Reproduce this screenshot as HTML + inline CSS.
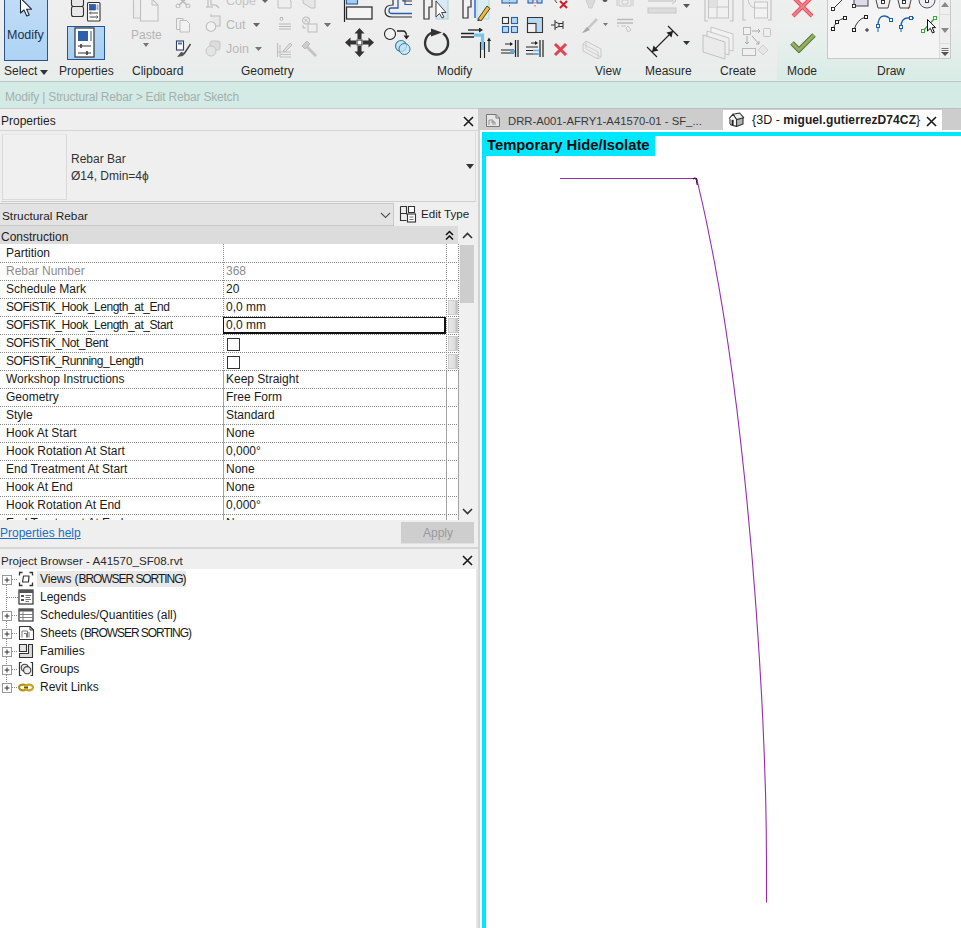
<!DOCTYPE html>
<html><head><meta charset="utf-8">
<style>
*{box-sizing:border-box;margin:0;padding:0}
html,body{width:961px;height:928px;overflow:hidden;background:#f0f0f0;font-family:"Liberation Sans",sans-serif;font-size:12px;color:#1e1e1e}
.abs{position:absolute}
.t{position:absolute;white-space:nowrap;line-height:14px}
#ribbon{left:0;top:0;width:961px;height:82px;background:linear-gradient(#eeefee 0,#ebedec 60px,#e6eeeb 81px);border-bottom:1px solid #b9c8c4}
.plabel{position:absolute;top:64px;font-size:12px;line-height:14px;color:#2a2a2a;white-space:nowrap}
#ctx{left:0;top:82px;width:961px;height:27px;background:#d4ebe5;border-bottom:1px solid #c9cbca}
#props{left:0;top:108px;width:478px;height:442px;background:#efefef;box-shadow:inset 0 1px #c9cbca}
#pb{left:0;top:550px;width:478px;height:378px;background:#ffffff}
#split{left:478px;top:108px;width:4px;height:820px;background:#fcfcfc;border-left:2px solid #d2d2d2}
#tabs{left:478px;top:108px;width:483px;height:22px;background:#cdcdcd;box-shadow:inset 0 1px #c0c0c0}
#view{left:482px;top:132px;width:479px;height:796px;background:#fff;border-left:4px solid #00e6ff;border-top:4px solid #00e6ff}
.row{position:absolute;left:0;width:458px;height:18px}
.dotH{position:absolute;height:1px;background-image:linear-gradient(to right,#8a8a8a 50%,transparent 50%);background-size:2px 1px}
.dotV{position:absolute;width:1px;background-image:linear-gradient(to bottom,#8a8a8a 50%,transparent 50%);background-size:1px 2px}
.gk{position:absolute;left:6px;white-space:nowrap;font-size:12px;line-height:14px}
.gv{position:absolute;left:226px;white-space:nowrap;font-size:12px;line-height:14px}
.cb{position:absolute;left:227px;width:13px;height:13px;border:1px solid #333;background:#fff}
.sel{position:absolute;left:223px;width:223px;height:18px;border:2px solid #111;border-width:1px 2px 2px 1px;margin-top:1px;height:17px}
.btn3{position:absolute;left:448px;width:10px;height:15px;background:linear-gradient(to right,#e8e8e8,#dcdcdc 70%,#b8b8b8);border:1px solid #cfcfcf}
</style></head><body>
<div id="ribbon" class="abs">
 <div class="abs" style="left:777px;top:0;width:184px;height:80px;background:linear-gradient(#eeefef 0px,#eaefed 35px,#d8ece6 80px)"></div>
 <!-- Select panel -->
 <div class="abs" style="left:4px;top:-2px;width:44px;height:63px;background:linear-gradient(#c0dcf6,#add3f4);border:1px solid #2a5490"></div>
 <svg class="abs" style="left:18px;top:-2px" width="16" height="21" viewBox="0 0 16 21"><path d="M2.5 0V15L6 12L8.8 18L11.2 17L8.6 11.2H13.5Z" fill="#fff" stroke="#1e2a38" stroke-width="1.1" stroke-linejoin="round"/></svg>
 <span class="t" style="left:7px;top:28px;font-size:12.5px;color:#1d3150">Modify</span>
 <span class="plabel" style="left:4px">Select</span>
 <svg class="abs" style="left:40px;top:70px" width="8" height="5"><path d="M0 0H8L4 5Z" fill="#333"/></svg>
 <!-- Properties panel -->
 <svg class="abs" style="left:70px;top:-4px" width="32" height="26" viewBox="0 0 32 26"><rect x="1.5" y="0.5" width="12" height="10" rx="2" fill="#e8e8e8" stroke="#333" stroke-width="1.1"/><rect x="1.5" y="10.5" width="12" height="10" rx="2" fill="#e8e8e8" stroke="#333" stroke-width="1.1"/><rect x="17.5" y="6.5" width="12.5" height="18.5" rx="1" fill="#fff" stroke="#333" stroke-width="1.1"/><rect x="19.5" y="8.5" width="6" height="5.5" fill="#2e5fa8" stroke="#1e3f78" stroke-width="0.6"/><rect x="26.5" y="8.5" width="2" height="5.5" fill="#9ab0c8"/><path d="M19.5 17H28M19.5 21H28" stroke="#444" stroke-width="1"/><path d="M21 15.5L19.5 17L21 18.5M26.5 19.5L28 21L26.5 22.5" fill="none" stroke="#444" stroke-width="0.8"/></svg>
 <div class="abs" style="left:67px;top:26px;width:38px;height:34px;background:linear-gradient(#b4d6f4,#a6cff2);border:1px solid #2a5490"></div>
 <svg class="abs" style="left:74px;top:27px" width="22" height="32" viewBox="0 0 22 32"><rect x="1" y="1" width="19" height="29" fill="#fff" stroke="#333" stroke-width="1.2"/><rect x="4" y="4" width="10" height="10" fill="#2e5fa8"/><rect x="16" y="4" width="2" height="10" fill="#9ab"/><path d="M4 19H17M4 26H17" stroke="#333" stroke-width="1.2"/><path d="M7 17V21M13 24V28" stroke="#333" stroke-width="1.5"/></svg>
 <span class="plabel" style="left:59px">Properties</span>
 <!-- Clipboard -->
 <svg class="abs" style="left:132px;top:-1px" width="28" height="24" viewBox="0 0 28 24"><path d="M1.5 0V19H8" fill="#ececec" stroke="#c4c4c4" stroke-width="1.1"/><path d="M8.5 0V22H26V6L20 0" fill="#f0f0f0" stroke="#c0c0c0" stroke-width="1.1"/><path d="M20 0V6H26" fill="none" stroke="#c0c0c0"/></svg>
 <span class="t" style="left:131px;top:28px;font-size:12px;color:#b4b4b4">Paste</span>
 <svg class="abs" style="left:143px;top:43px" width="6" height="4"><path d="M0 0H6L3 4Z" fill="#777"/></svg>
 <svg class="abs" style="left:175px;top:-2px" width="16" height="10" viewBox="0 0 16 10"><path d="M4 0L12 7M12 0L4 7" stroke="#b8b8b8" stroke-width="1.5"/><circle cx="3" cy="8" r="2" fill="none" stroke="#b8b8b8"/><circle cx="13" cy="8" r="2" fill="none" stroke="#b8b8b8"/></svg>
 <svg class="abs" style="left:175px;top:17px" width="16" height="16" viewBox="0 0 16 16"><path d="M1.5 1.5H8V12.5H1.5Z" fill="#f0f0f0" stroke="#bdbdbd"/><path d="M5 3.5H11.5L14.5 6.5V15H5Z" fill="#f2f2f2" stroke="#bdbdbd"/></svg>
 <svg class="abs" style="left:175px;top:40px" width="17" height="18" viewBox="0 0 17 18"><rect x="1.5" y="1" width="7" height="9" fill="#fff" stroke="#2d3e6b" stroke-width="1.1"/><rect x="3" y="2.5" width="4" height="2" fill="#5571b0"/><path d="M9 14L15.5 4" stroke="#444" stroke-width="1.4"/><path d="M2 17L6 12L10 13L8 16Z" fill="#555"/></svg>
 <span class="plabel" style="left:132px">Clipboard</span>
 <!-- Geometry -->
 <svg class="abs" style="left:205px;top:-3px" width="17" height="12" viewBox="0 0 17 12"><path d="M1 10H8M3 1V10M6 3V8H11L14 11" fill="none" stroke="#b8b8b8" stroke-width="1.1"/></svg>
 <span class="t" style="left:226px;top:-6px;font-size:12.5px;color:#c4c4c4">Cope</span>
 <svg class="abs" style="left:262px;top:0px" width="6" height="3"><path d="M0 0H6L3 3Z" fill="#666"/></svg>
 <svg class="abs" style="left:205px;top:14px" width="17" height="19" viewBox="0 0 17 19"><path d="M6 2H15V12H9" fill="#e8e8e8" stroke="#bdbdbd" stroke-width="1.1"/><circle cx="6" cy="12.5" r="4.8" fill="#f2f2f2" stroke="#bdbdbd" stroke-width="1.1"/><path d="M6 0V3" stroke="#bdbdbd"/></svg>
 <span class="t" style="left:226px;top:18px;font-size:12.5px;color:#b8b8b8">Cut</span>
 <svg class="abs" style="left:253px;top:23px" width="7" height="4"><path d="M0 0H7L3.5 4Z" fill="#666"/></svg>
 <svg class="abs" style="left:205px;top:40px" width="17" height="18" viewBox="0 0 17 18"><rect x="5" y="1" width="10" height="9" rx="2" fill="#dcdcdc" stroke="#c6c6c6"/><circle cx="6" cy="11" r="5" fill="#e4e4e4" stroke="#c6c6c6"/></svg>
 <span class="t" style="left:226px;top:42px;font-size:12.5px;color:#b8b8b8">Join</span>
 <svg class="abs" style="left:255px;top:47px" width="7" height="4"><path d="M0 0H7L3.5 4Z" fill="#777"/></svg>
 <svg class="abs" style="left:276px;top:-3px" width="17" height="12" viewBox="0 0 17 12"><path d="M2 1H12L15 4V11H2Z" fill="#eee" stroke="#c0c0c0"/></svg>
 <svg class="abs" style="left:301px;top:-3px" width="17" height="12" viewBox="0 0 17 12"><path d="M2 1H14V11L10 11L2 6Z" fill="#e6e6e6" stroke="#c0c0c0"/></svg>
 <svg class="abs" style="left:277px;top:16px" width="16" height="14" viewBox="0 0 16 14"><path d="M3 1.5H6M2 8H14M2 10.5H14M2 13H14" stroke="#b8b8b8" stroke-width="1.1"/><circle cx="4.5" cy="3" r="1.5" fill="none" stroke="#bbb"/></svg>
 <svg class="abs" style="left:301px;top:16px" width="17" height="17" viewBox="0 0 17 17"><circle cx="5" cy="4.5" r="3.5" fill="none" stroke="#bbb" stroke-width="1.1"/><path d="M3 2.5L7 6.5M7 2.5L3 6.5" stroke="#bbb"/><rect x="7" y="8" width="9" height="8" fill="#eee" stroke="#bbb"/><path d="M2 9V12H5" fill="none" stroke="#bbb"/></svg>
 <svg class="abs" style="left:324px;top:23px" width="7" height="4"><path d="M0 0H7L3.5 4Z" fill="#666"/></svg>
 <svg class="abs" style="left:276px;top:40px" width="17" height="18" viewBox="0 0 17 18"><path d="M1.5 3V17M4 5V17M1.5 12H15M4 14.5H15M4 17H15" stroke="#c0c0c0" stroke-width="1.1"/><path d="M7 11L14 3L16 5L9 12Z" fill="#ddd" stroke="#bbb"/></svg>
 <svg class="abs" style="left:300px;top:40px" width="18" height="18" viewBox="0 0 18 18"><path d="M7 7L16 16" stroke="#c4c4c4" stroke-width="3"/><path d="M2 6L7 1L10 4L5 9Z" fill="#ccc" stroke="#bbb"/></svg>
 <span class="plabel" style="left:241px">Geometry</span>
 <!-- Modify -->
 <svg class="abs" style="left:325px;top:23px" width="5" height="3"><path d="M0 0H5L2.5 3Z" fill="#777"/></svg>
 <svg class="abs" style="left:343px;top:-3px" width="32" height="26" viewBox="0 0 32 26"><path d="M1.5 0V25" stroke="#222" stroke-width="1.2"/><rect x="3.5" y="1" width="11" height="6" fill="#a8cdf0" stroke="#2a5ea8" stroke-width="1.1"/><rect x="3.5" y="10" width="25.5" height="12" fill="#f4f4f4" stroke="#333" stroke-width="1.3"/></svg>
 <svg class="abs" style="left:383px;top:-3px" width="31" height="22" viewBox="0 0 31 22"><path d="M10 0V8Q2 8 2 14Q2 20 9 20H29" fill="none" stroke="#333" stroke-width="1.2"/><path d="M15 0V11H8Q6 11 6 14Q6 16.5 9 16.5H29" fill="none" stroke="#2a5ea8" stroke-width="1.3"/><path d="M20 0V4H29M24 0V1" fill="none" stroke="#333" stroke-width="1.1"/><path d="M22 2V7.5H29" fill="none" stroke="#2a5ea8" stroke-width="1.2"/></svg>
 <svg class="abs" style="left:422px;top:-3px" width="28" height="23" viewBox="0 0 28 23"><path d="M2 0V22H7V10H10V0" fill="#f2f2f2" stroke="#333" stroke-width="1.2"/><rect x="14" y="0" width="12" height="22" fill="#d8e8f4" stroke="#9cc" stroke-width="0.8"/><path d="M14 4V20L17.5 16.5L20 21L22 20L19.5 15.5H24Z" fill="#fff" stroke="#444" stroke-width="1"/></svg>
 <svg class="abs" style="left:461px;top:-3px" width="30" height="24" viewBox="0 0 30 24"><path d="M2 0V21H7V10H10V0" fill="#f2f2f2" stroke="#333" stroke-width="1.2"/><path d="M14 0V21" stroke="#2a6ad0" stroke-width="1.5"/><rect x="16" y="0" width="12" height="22" fill="#d8eef0" stroke="#9cc" stroke-width="0.6"/><path d="M17 22L26 9L29 11.5L20 24Z" fill="#f5b82e" stroke="#333" stroke-width="0.9"/><path d="M17 22L16 24.5L19 23.5" fill="#333"/></svg>
 <svg class="abs" style="left:344px;top:27px" width="31" height="31" viewBox="0 0 31 31"><path d="M15.5 1L20.5 6.5H17.5V12H13.5V6.5H10.5Z M15.5 30L20.5 24.5H17.5V19H13.5V24.5H10.5Z M1 15.5L6.5 10.5V13.5H12V17.5H6.5V20.5Z M30 15.5L24.5 10.5V13.5H19V17.5H24.5V20.5Z" fill="#333"/><rect x="13" y="13" width="5" height="5" fill="#fff" stroke="#333" stroke-width="1.1"/></svg>
 <svg class="abs" style="left:383px;top:27px" width="30" height="30" viewBox="0 0 30 30"><circle cx="7" cy="7" r="5.5" fill="#f3f3f3" stroke="#222" stroke-width="1.1"/><path d="M14 4H20Q23 4 23.5 8.5" fill="none" stroke="#222" stroke-width="1.3"/><path d="M20.5 8.5H26.5L23.5 12.5Z" fill="#222"/><circle cx="18" cy="19" r="5.5" fill="#c6e2f6" stroke="#2e7f9a" stroke-width="1.1"/><circle cx="21.5" cy="22" r="5.5" fill="#c6e2f6" stroke="#2e7f9a" stroke-width="1" fill-opacity="0.7"/></svg>
 <svg class="abs" style="left:422px;top:28px" width="30" height="30" viewBox="0 0 30 30"><path d="M10 4.5A11.5 11.5 0 1 0 21 5.5" fill="none" stroke="#333" stroke-width="2.4"/><path d="M9 0.5L20 4.5L9 8.5Z" fill="#333"/></svg>
 <svg class="abs" style="left:460px;top:28px" width="31" height="30" viewBox="0 0 31 30"><path d="M8 2H20" stroke="#222" stroke-width="1.3"/><path d="M19 -0.5L23 2L19 4.5Z" fill="#222"/><path d="M1 5.5H14M1 9H14" stroke="#222" stroke-width="1.3"/><path d="M14 7.2H22.5V22" fill="none" stroke="#74c4f0" stroke-width="3.2"/><path d="M20.5 14V30M24.5 14V30" fill="none" stroke="#222" stroke-width="1.1"/><path d="M20.9 12V22" stroke="#74c4f0" stroke-width="0" /><path d="M29 11V24" stroke="#222" stroke-width="1.2"/><path d="M27 13L29 9.5L31 13Z" fill="#222"/></svg>
 <svg class="abs" style="left:500px;top:-4px" width="20" height="11" viewBox="0 0 20 11"><rect x="2" y="0" width="15" height="7" fill="#b4d4f0" stroke="#2a5ea8" stroke-width="1.1"/><path d="M9.5 0V11" stroke="#d44" stroke-width="1" stroke-dasharray="1.5 1.5"/></svg>
 <svg class="abs" style="left:526px;top:-4px" width="20" height="11" viewBox="0 0 20 11"><rect x="2" y="0" width="5" height="7" fill="#b4d4f0" stroke="#2a5ea8" stroke-width="1.1"/><rect x="11" y="0" width="5" height="7" fill="#b4d4f0" stroke="#2a5ea8" stroke-width="1.1"/><path d="M9 0V11" stroke="#d44" stroke-width="1" stroke-dasharray="1.5 1.5"/></svg>
 <svg class="abs" style="left:553px;top:-3px" width="16" height="12" viewBox="0 0 16 12"><path d="M1 2L4 6" stroke="#444"/><path d="M7 4L14 11M14 4L7 11" stroke="#d02030" stroke-width="2"/></svg>
 <svg class="abs" style="left:501px;top:16px" width="18" height="18" viewBox="0 0 18 18"><rect x="1.5" y="1.5" width="6" height="6" fill="#f4f4f4" stroke="#333" stroke-width="1.1"/><rect x="10.5" y="1.5" width="6" height="6" fill="#b8d8f2" stroke="#2a5ea8" stroke-width="1.1"/><rect x="1.5" y="10.5" width="6" height="6" fill="#b8d8f2" stroke="#2a5ea8" stroke-width="1.1"/><rect x="10.5" y="10.5" width="6" height="6" fill="#b8d8f2" stroke="#2a5ea8" stroke-width="1.1"/></svg>
 <svg class="abs" style="left:526px;top:16px" width="18" height="18" viewBox="0 0 18 18"><path d="M1.5 1.5H16.5V16.5H1.5Z" fill="#b8d8f2" stroke="#333" stroke-width="1.1"/><rect x="1.5" y="7.5" width="8.5" height="9" fill="#f0f0f0" stroke="#333" stroke-width="1.1"/></svg>
 <svg class="abs" style="left:551px;top:19px" width="16" height="13" viewBox="0 0 16 13"><path d="M0 6H4M4 1V11M4 3L8 4.5V7.5L4 9M8 4.5H12M8 7.5H12M12 2V10" fill="none" stroke="#333" stroke-width="1"/></svg>
 <svg class="abs" style="left:501px;top:39px" width="18" height="19" viewBox="0 0 18 19"><path d="M4 5H11M0 11H13M0 14H13" stroke="#222" stroke-width="1.2"/><path d="M9 3L12 5L9 7Z" fill="#222"/><path d="M9 12.5H14" stroke="#5db3ea" stroke-width="2.5"/><path d="M14.5 1V18M17 1V18" stroke="#222" stroke-width="1.2"/></svg>
 <svg class="abs" style="left:526px;top:39px" width="18" height="19" viewBox="0 0 18 19"><path d="M5 4H11M0 8H12M0 11.5H12M0 15H12" stroke="#222" stroke-width="1.2"/><path d="M9 2L12 4L9 6Z" fill="#222"/><path d="M7 11.5H13M7 15H13" stroke="#5db3ea" stroke-width="1.5"/><path d="M14 1V18M17 1V18" stroke="#222" stroke-width="1.2"/></svg>
 <svg class="abs" style="left:553px;top:42px" width="15" height="15" viewBox="0 0 15 15"><path d="M2 2L13 13M13 2L2 13" stroke="#e34050" stroke-width="3"/></svg>
 <span class="plabel" style="left:437px">Modify</span>
 <!-- View -->
 <svg class="abs" style="left:581px;top:-3px" width="60" height="62" viewBox="0 0 60 62"><path d="M5 1Q5 6 7 8L8 11H11L12 8Q14 6 14 1Z" fill="#dadada" stroke="#c8c8c8" stroke-width="0.8"/><ellipse cx="24" cy="3" rx="2.5" ry="2" fill="#555"/><path d="M36 0V9M52 0V9M38 0V9H50V0M41 3H47V7H41Z" fill="none" stroke="#c4c4c4" stroke-width="0.9"/><path d="M1 36L15 21L17 23L5 35Z" fill="#c8c8c8"/><path d="M1 36L6 30L9 33Z" fill="#a8a8a8"/><path d="M22 26H27L24.5 29Z" fill="#777"/><path d="M36 22.5H52M36 26H52" stroke="#bbb" stroke-width="1.4"/><path d="M36 29H38M40 29H45M45 31L47 29L50 33L47 35Z" fill="none" stroke="#c0c0c0" stroke-width="0.9"/><path d="M2 47L5 44L20 52V60L17 62L2 54Z" fill="#ececec" stroke="#c4c4c4" stroke-width="0.9"/><path d="M5 44V52L20 60M2 47L17 55V62" fill="none" stroke="#c8c8c8" stroke-width="0.8"/></svg>
 <span class="plabel" style="left:595px">View</span>
 <!-- Measure -->
 <svg class="abs" style="left:646px;top:-3px" width="32" height="19" viewBox="0 0 32 19"><path d="M2 4H28" stroke="#c4c4c4" stroke-width="1.2"/><path d="M26 1L30 4L26 7" fill="none" stroke="#c4c4c4"/><rect x="2" y="11" width="28" height="5" fill="#dcdcdc" stroke="#c8c8c8"/></svg>
 <svg class="abs" style="left:683px;top:4px" width="7" height="4"><path d="M0 0H7L3.5 4Z" fill="#555"/></svg>
 <svg class="abs" style="left:646px;top:25px" width="33" height="33" viewBox="0 0 33 33"><path d="M1 22L11 32M22 1L32 11" stroke="#222" stroke-width="1.2"/><path d="M6 27L27 6" stroke="#222" stroke-width="1.1"/><path d="M6 27L7.5 20.5L12.5 25.5Z M27 6L25.5 12.5L20.5 7.5Z" fill="#222"/></svg>
 <svg class="abs" style="left:683px;top:41px" width="7" height="4"><path d="M0 0H7L3.5 4Z" fill="#333"/></svg>
 <span class="plabel" style="left:645px">Measure</span>
 <!-- Create -->
 <svg class="abs" style="left:702px;top:-3px" width="72" height="64" viewBox="0 0 72 64"><path d="M3 0V24H6M31 0V24H28" fill="none" stroke="#c0c0c0" stroke-width="1.1"/><rect x="6.5" y="0" width="20" height="21" fill="#f0f0f0" stroke="#c4c4c4"/><path d="M15 0V21M6.5 10H26.5" stroke="#c4c4c4"/><rect x="7" y="0" width="8" height="10" fill="#e0e0e0"/><path d="M41 0V23H44M69 0V23H66" fill="none" stroke="#c0c0c0" stroke-width="1.1"/><path d="M46 0Q46 10 53 11" fill="#eee" stroke="#c4c4c4"/><rect x="52.5" y="5" width="13" height="16" fill="#f2f2f2" stroke="#c4c4c4"/><path d="M52.5 11H65.5" stroke="#c4c4c4"/>
 <path d="M9 30L31 37V54L9 47Z" fill="#f2f2f2" stroke="#c2c2c2" stroke-width="0.9"/><path d="M5 34L27 41V58L5 51Z" fill="#efefef" stroke="#c0c0c0" stroke-width="0.9"/><path d="M1 38L23 45V62L1 55Z" fill="#ebebeb" stroke="#bcbcbc" stroke-width="0.9"/>
 <rect x="41.5" y="30.5" width="7" height="7" fill="#f2f2f2" stroke="#b8b8b8"/><path d="M50 34H58M56 32L58 34L56 36" fill="none" stroke="#aaa"/><rect x="61.5" y="31.5" width="7" height="8" rx="1" fill="#eee" stroke="#c4c4c4"/><path d="M45 39V47M43 45L45 47L47 45" fill="none" stroke="#aaa"/><path d="M50 39L57 47M57 44V47H54" fill="none" stroke="#aaa"/><rect x="40.5" y="51.5" width="13" height="7" fill="#f0f0f0" stroke="#b8b8b8"/><path d="M61 48L66 53L61 58L56 53Z" fill="#e6e6e6" stroke="#cfcfcf"/></svg>
 <span class="plabel" style="left:720px">Create</span>
 <!-- Mode -->
 <svg class="abs" style="left:790px;top:-3px" width="25" height="21" viewBox="0 0 25 21"><path d="M3 0L22 19M22 0L3 19" stroke="#e9505e" stroke-width="4"/><path d="M3 0L22 19M22 0L3 19" stroke="#f27f8a" stroke-width="2"/></svg>
 <svg class="abs" style="left:790px;top:33px" width="26" height="20" viewBox="0 0 26 20"><path d="M2 10L9 17L24 2" fill="none" stroke="#5a7536" stroke-width="5"/><path d="M2 10L9 17L24 2" fill="none" stroke="#93b062" stroke-width="3"/></svg>
 <span class="plabel" style="left:787px">Mode</span>
 <!-- Draw gallery -->
 <div class="abs" style="left:827px;top:-2px;width:124px;height:61px;background:#f4f4f4;border:1px solid #c8c8c8"></div>
 <div class="abs" style="left:939px;top:-1px;width:11px;height:59px;background:#efefef;border-left:1px solid #dadada"></div>
 <div class="abs" style="left:940px;top:14px;width:10px;height:1px;background:#dedede"></div>
 <div class="abs" style="left:940px;top:43px;width:10px;height:1px;background:#dedede"></div>
 <svg class="abs" style="left:941px;top:2px" width="8" height="5"><path d="M0 5H8L4 0Z" fill="#888"/></svg>
 <svg class="abs" style="left:941px;top:28px" width="8" height="5"><path d="M0 0H8L4 5Z" fill="#888"/></svg>
 <svg class="abs" style="left:941px;top:48px" width="8" height="8"><path d="M0.5 0.5H7.5M0.5 2.5H7.5" stroke="#777"/><path d="M0 4H8L4 8Z" fill="#555"/></svg>
 <svg class="abs" style="left:830px;top:-4px" width="108" height="40" viewBox="0 0 108 40"><path d="M3 13L13 3" stroke="#333" stroke-width="1"/><rect x="1.5" y="11.5" width="3" height="3" fill="#fff" stroke="#222" stroke-width="0.9"/><rect x="24" y="-2" width="14" height="12" fill="#dcdce8" stroke="#444" stroke-width="1"/><rect x="22.5" y="8.5" width="3" height="3" fill="#fff" stroke="#222" stroke-width="0.9"/><path d="M45 0L48 12H58L61 0" fill="#f0f0f0" stroke="#444" stroke-width="1"/><rect x="51.5" y="4.5" width="3" height="3" fill="#fff" stroke="#222" stroke-width="0.9"/><path d="M67 0L70 12H79L82 0" fill="#f0f0f0" stroke="#444" stroke-width="1"/><rect x="72.5" y="4.5" width="3" height="3" fill="#fff" stroke="#222" stroke-width="0.9"/><path d="M80 10L78 13" stroke="#c33" stroke-width="1.2"/><circle cx="97" cy="4" r="8" fill="#eeeef2" stroke="#555" stroke-width="1"/><rect x="95.5" y="3.5" width="3" height="3" fill="#fff" stroke="#222" stroke-width="0.9"/>
 <path d="M3 34Q5 24 15 22" fill="none" stroke="#333"/><rect x="1.5" y="31.5" width="3" height="3" fill="#fff" stroke="#222"/><rect x="5.5" y="24.5" width="3" height="3" fill="#fff" stroke="#222"/><rect x="13.5" y="20.5" width="3" height="3" fill="#fff" stroke="#222"/>
 <path d="M24 34Q27 23 36 21" fill="none" stroke="#333"/><rect x="22.5" y="32.5" width="3" height="3" fill="#fff" stroke="#222"/><rect x="34.5" y="19.5" width="3" height="3" fill="#fff" stroke="#222"/><path d="M35 34H39M37 32V36" stroke="#222"/>
 <path d="M48 30Q48 20 54 20Q58 20 61 24" fill="none" stroke="#2160a8" stroke-width="1.3"/><rect x="46.5" y="28.5" width="3" height="3" fill="#fff" stroke="#2160a8"/><rect x="59.5" y="22.5" width="3" height="3" fill="#fff" stroke="#2160a8"/><path d="M48 32V36" stroke="#2160a8"/>
 <path d="M71 31Q71 22 78 22H84" fill="none" stroke="#2160a8" stroke-width="1.3"/><rect x="69.5" y="29.5" width="3" height="3" fill="#fff" stroke="#2160a8"/><rect x="79.5" y="20.5" width="3" height="3" fill="#fff" stroke="#2160a8"/><path d="M71 33V36" stroke="#2160a8"/>
 <path d="M93 35L105 22" stroke="#3aa83a" stroke-width="1.3"/><rect x="91.5" y="33.5" width="3" height="3" fill="#fff" stroke="#3aa83a"/><rect x="103.5" y="20.5" width="3" height="3" fill="#fff" stroke="#3aa83a"/><path d="M97.5 23.5V35L100.3 32.3L102.5 37L104.3 36.2L102.2 31.6H105.5Z" fill="#fff" stroke="#111" stroke-width="1"/></svg>
 <span class="plabel" style="left:877px">Draw</span>
</div>

<div id="ctx" class="abs"><span class="t" style="left:5px;top:8px;color:#a3b0ad;font-size:12px;letter-spacing:-0.2px">Modify | Structural Rebar &gt; Edit Rebar Sketch</span></div>
<div id="props" class="abs">
 <div class="abs" style="left:0;top:1px;width:478px;height:22px;background:#efefef;border-bottom:1px solid #d4d4d4"></div>
 <span class="t" style="left:1px;top:6px;font-size:12px">Properties</span>
 <svg class="abs" style="left:463px;top:8px" width="11" height="11" viewBox="0 0 11 11"><path d="M1 1L10 10M10 1L1 10" stroke="#1a1a1a" stroke-width="1.6"/></svg>
 <div class="abs" style="left:1px;top:24px;width:475px;height:70px;border-right:1px solid #dcdcdc;border-bottom:1px solid #cfcfcf"></div>
 <div class="abs" style="left:2px;top:26px;width:65px;height:66px;border:1px solid #dadada;border-top-color:#e6e6e6;background:#f0f0f0"></div>
 <span class="t" style="left:71px;top:44px;font-size:12px;color:#333">Rebar Bar</span>
 <span class="t" style="left:71px;top:61px;font-size:12px;color:#333">&Oslash;14, Dmin=4&#981;</span>
 <svg class="abs" style="left:466px;top:56px" width="8" height="5"><path d="M0 0H8L4 5Z" fill="#333"/></svg>
 <div class="abs" style="left:0;top:95px;width:394px;height:23px;background:#e3e3e3;border:1px solid #c8c8c8;border-left:none"></div>
 <span class="t" style="left:2px;top:101px;font-size:11.8px;color:#1e1e1e">Structural Rebar</span>
 <svg class="abs" style="left:399px;top:97px" width="18" height="18" viewBox="0 0 18 18"><path d="M1.5 1.5H7.5V9.5M1.5 1.5V15.5H7.5" fill="none" stroke="#333" stroke-width="1.1"/><path d="M9.5 1.5H15.5V7.5H9.5Z" fill="#fff" stroke="#333" stroke-width="1.1"/><rect x="8.5" y="9" width="8" height="8" fill="#fff" stroke="#333" stroke-width="1.1"/><path d="M10.5 12H14.5M10.5 14.5H14.5" stroke="#555" stroke-width="0.8"/><path d="M1.5 8.5H7.5" stroke="#333"/></svg>
 <span class="t" style="left:421px;top:99px;font-size:11.6px;color:#1e1e1e">Edit Type</span>
 <svg class="abs" style="left:380px;top:104px" width="11" height="7"><path d="M1 1L5.5 5.5L10 1" stroke="#555" stroke-width="1.1" fill="none"/></svg>
 <div class="abs" style="left:0;top:118px;width:458px;height:18px;background:#dcdcdc"></div>
 <span class="t" style="left:1px;top:122px;font-size:12px;color:#1e1e1e">Construction</span>
 <svg class="abs" style="left:445px;top:122px" width="9" height="11"><path d="M1 5L4.5 1.5L8 5M1 9.5L4.5 6L8 9.5" stroke="#111" stroke-width="1.5" fill="none"/></svg>
 <svg class="abs" style="left:462px;top:124px" width="11" height="7"><path d="M1 6L5.5 1.5L10 6" stroke="#333" stroke-width="1.6" fill="none"/></svg>
 <div class="abs" style="left:458px;top:136px;width:18px;height:275px;background:#f0f0f0"></div>
 <div class="abs" style="left:460px;top:137px;width:14px;height:58px;background:#cdcdcd"></div>
 <svg class="abs" style="left:462px;top:400px" width="11" height="7"><path d="M1 1L5.5 5.5L10 1" stroke="#333" stroke-width="1.6" fill="none"/></svg>
 <div id="grid" class="abs" style="left:0;top:136px;width:459px;height:276px;background:#fff;overflow:hidden">
  <span class="dotV" style="left:223px;top:0;height:126px"></span>
  <span class="dotV" style="left:446px;top:0;height:126px"></span>
  <span class="dotV" style="left:458px;top:0;height:126px"></span>
  <span class="abs" style="left:223px;top:126px;width:1px;height:150px;background:#a4a4a4"></span>
  <span class="abs" style="left:446px;top:126px;width:1px;height:150px;background:#a4a4a4"></span>
  <span class="abs" style="left:458px;top:126px;width:1px;height:150px;background:#a4a4a4"></span>
<span class="gk" style="top:2px;color:#1a1a1a">Partition</span>
<span class="dotH" style="left:0;width:458px;top:18px"></span>
<span class="gk" style="top:20px;color:#8c8c8c">Rebar Number</span>
<span class="gv" style="top:20px;color:#8c8c8c">368</span>
<span class="dotH" style="left:0;width:458px;top:36px"></span>
<span class="gk" style="top:38px;color:#1a1a1a">Schedule Mark</span>
<span class="gv" style="top:38px;color:#1a1a1a">20</span>
<span class="dotH" style="left:0;width:458px;top:54px"></span>
<span class="gk" style="top:56px;color:#1a1a1a;letter-spacing:-0.45px">SOFiSTiK_Hook_Length_at_End</span>
<span class="gv" style="top:56px;color:#1a1a1a">0,0 mm</span>
<span class="btn3" style="top:56px"></span>
<span class="dotH" style="left:0;width:458px;top:72px"></span>
<span class="gk" style="top:74px;color:#1a1a1a;letter-spacing:-0.45px">SOFiSTiK_Hook_Length_at_Start</span>
<span class="gv" style="top:74px;color:#1a1a1a">0,0 mm</span>
<span class="sel" style="top:72px"></span>
<span class="btn3" style="top:74px"></span>
<span class="dotH" style="left:0;width:458px;top:90px"></span>
<span class="gk" style="top:92px;color:#1a1a1a;letter-spacing:-0.45px">SOFiSTiK_Not_Bent</span>
<span class="cb" style="top:94px"></span>
<span class="btn3" style="top:92px"></span>
<span class="dotH" style="left:0;width:458px;top:108px"></span>
<span class="gk" style="top:110px;color:#1a1a1a;letter-spacing:-0.45px">SOFiSTiK_Running_Length</span>
<span class="cb" style="top:112px"></span>
<span class="btn3" style="top:110px"></span>
<span class="dotH" style="left:0;width:458px;top:126px"></span>
<span class="gk" style="top:128px;color:#1a1a1a">Workshop Instructions</span>
<span class="gv" style="top:128px;color:#1a1a1a">Keep Straight</span>
<span class="dotH" style="left:0;width:458px;top:144px"></span>
<span class="gk" style="top:146px;color:#1a1a1a">Geometry</span>
<span class="gv" style="top:146px;color:#1a1a1a">Free Form</span>
<span class="dotH" style="left:0;width:458px;top:162px"></span>
<span class="gk" style="top:164px;color:#1a1a1a">Style</span>
<span class="gv" style="top:164px;color:#1a1a1a">Standard</span>
<span class="dotH" style="left:0;width:458px;top:180px"></span>
<span class="gk" style="top:182px;color:#1a1a1a">Hook At Start</span>
<span class="gv" style="top:182px;color:#1a1a1a">None</span>
<span class="dotH" style="left:0;width:458px;top:198px"></span>
<span class="gk" style="top:200px;color:#1a1a1a">Hook Rotation At Start</span>
<span class="gv" style="top:200px;color:#1a1a1a">0,000°</span>
<span class="dotH" style="left:0;width:458px;top:216px"></span>
<span class="gk" style="top:218px;color:#1a1a1a">End Treatment At Start</span>
<span class="gv" style="top:218px;color:#1a1a1a">None</span>
<span class="dotH" style="left:0;width:458px;top:234px"></span>
<span class="gk" style="top:236px;color:#1a1a1a">Hook At End</span>
<span class="gv" style="top:236px;color:#1a1a1a">None</span>
<span class="dotH" style="left:0;width:458px;top:252px"></span>
<span class="gk" style="top:254px;color:#1a1a1a">Hook Rotation At End</span>
<span class="gv" style="top:254px;color:#1a1a1a">0,000°</span>
<span class="dotH" style="left:0;width:458px;top:270px"></span>
<span class="gk" style="top:272px;color:#1a1a1a">End Treatment At End</span>
<span class="gv" style="top:272px;color:#1a1a1a">None</span>
<span class="dotH" style="left:0;width:458px;top:288px"></span>
 </div>
 <span class="t" style="left:0;top:418px;font-size:12px;color:#1a6fc4;text-decoration:underline">Properties help</span>
 <div class="abs" style="left:401px;top:414px;width:73px;height:22px;background:#cecece;border-bottom:1px solid #e0e0e0"></div>
 <span class="t" style="left:423px;top:418px;font-size:12px;color:#9a9a9a">Apply</span>
 <div class="abs" style="left:0;top:439px;width:478px;height:2px;background:#d6d6d6"></div>
</div>
<div id="pb" class="abs">
 <div class="abs" style="left:0;top:0;width:478px;height:19px;background:#efefef"></div>
 <span class="t" style="left:1px;top:4px;font-size:11.6px;color:#2a2a2a">Project Browser - A41570_SF08.rvt</span>
 <svg class="abs" style="left:462px;top:5px" width="11" height="11" viewBox="0 0 11 11"><path d="M1 1L10 10M10 1L1 10" stroke="#1a1a1a" stroke-width="1.6"/></svg>
 <div class="abs" style="left:37px;top:21px;width:149px;height:16px;background:#e8e8e8"></div>
 <span class="dotV" style="left:6px;top:35px;height:102px"></span>
 <svg class="abs" style="left:2px;top:25px" width="10" height="10" viewBox="0 0 10 10"><rect x="0.5" y="0.5" width="9" height="9" fill="#fff" stroke="#999"/><path d="M2.5 5H7.5M5 2.5V7.5" stroke="#333"/></svg>
 <span class="dotH" style="left:12px;top:29px;width:6px"></span>
 <svg class="abs" style="left:18px;top:21px" width="16" height="16" viewBox="0 0 16 16"><path d="M1.5 4.5V1.5H4.5M11.5 1.5H14.5V4.5M14.5 11.5V14.5H11.5M4.5 14.5H1.5V11.5" fill="none" stroke="#333" stroke-width="1.3"/><path d="M5.5 5H11L10.5 11H4.5Z" fill="none" stroke="#333" stroke-width="1.2" stroke-linejoin="round"/></svg>
 <span class="t" style="left:40px;top:22px;font-size:12px;color:#1a1a1a"><span style="letter-spacing:-0.1px">Views (</span><span style="letter-spacing:-1.05px">BROWSER SORTING</span>)</span>
 <span class="dotH" style="left:7px;top:47px;width:11px"></span>
 <svg class="abs" style="left:18px;top:39px" width="16" height="16" viewBox="0 0 16 16"><rect x="1" y="1" width="14" height="14" fill="#fff" stroke="#333" stroke-width="1.2"/><rect x="1" y="1" width="14" height="3" fill="#555"/><rect x="3" y="6" width="3" height="2" fill="#555"/><rect x="3" y="10" width="3" height="2" fill="#555"/><path d="M7.5 6.5H13M7.5 8.5H12M7.5 10.5H13M7.5 12.5H11" stroke="#666" stroke-width="0.9"/></svg>
 <span class="t" style="left:40px;top:40px;font-size:12px;color:#1a1a1a">Legends</span>
 <svg class="abs" style="left:2px;top:61px" width="10" height="10" viewBox="0 0 10 10"><rect x="0.5" y="0.5" width="9" height="9" fill="#fff" stroke="#999"/><path d="M2.5 5H7.5M5 2.5V7.5" stroke="#333"/></svg>
 <span class="dotH" style="left:12px;top:65px;width:6px"></span>
 <svg class="abs" style="left:18px;top:57px" width="16" height="16" viewBox="0 0 16 16"><rect x="1" y="2" width="14" height="12" fill="#fff" stroke="#333" stroke-width="1.2"/><rect x="1" y="2" width="14" height="2.5" fill="#555"/><path d="M1 7.5H15M1 10.5H15M5 4.5V14" stroke="#777" stroke-width="0.9"/></svg>
 <span class="t" style="left:40px;top:58px;font-size:12px;color:#1a1a1a">Schedules/Quantities (all)</span>
 <svg class="abs" style="left:2px;top:79px" width="10" height="10" viewBox="0 0 10 10"><rect x="0.5" y="0.5" width="9" height="9" fill="#fff" stroke="#999"/><path d="M2.5 5H7.5M5 2.5V7.5" stroke="#333"/></svg>
 <span class="dotH" style="left:12px;top:83px;width:6px"></span>
 <svg class="abs" style="left:18px;top:75px" width="17" height="16" viewBox="0 0 17 16"><path d="M1.5 1.5H12L15.5 5V14.5H1.5Z" fill="#fff" stroke="#333" stroke-width="1.1" stroke-linejoin="round"/><path d="M12 1.5V5H15.5" fill="none" stroke="#333"/><path d="M4 12.5V6H9.5V12.5M6 8.5H8.5V12.5M11 7V12.5" fill="none" stroke="#666" stroke-width="0.9"/></svg>
 <span class="t" style="left:40px;top:76px;font-size:12px;color:#1a1a1a"><span style="letter-spacing:-0.1px">Sheets (</span><span style="letter-spacing:-1.05px">BROWSER SORTING</span>)</span>
 <svg class="abs" style="left:2px;top:97px" width="10" height="10" viewBox="0 0 10 10"><rect x="0.5" y="0.5" width="9" height="9" fill="#fff" stroke="#999"/><path d="M2.5 5H7.5M5 2.5V7.5" stroke="#333"/></svg>
 <span class="dotH" style="left:12px;top:101px;width:6px"></span>
 <svg class="abs" style="left:18px;top:93px" width="16" height="16" viewBox="0 0 16 16"><path d="M1.5 1.5H8.5V8.5H1.5Z" fill="#e6e6e6" stroke="#333" stroke-width="1.1"/><path d="M10.5 1.5H14.5V14.5H1.5V10.5H10.5Z" fill="#dcdcdc" stroke="#333" stroke-width="1.1" stroke-linejoin="round"/></svg>
 <span class="t" style="left:40px;top:94px;font-size:12px;color:#1a1a1a">Families</span>
 <svg class="abs" style="left:2px;top:115px" width="10" height="10" viewBox="0 0 10 10"><rect x="0.5" y="0.5" width="9" height="9" fill="#fff" stroke="#999"/><path d="M2.5 5H7.5M5 2.5V7.5" stroke="#333"/></svg>
 <span class="dotH" style="left:12px;top:119px;width:6px"></span>
 <svg class="abs" style="left:18px;top:111px" width="16" height="16" viewBox="0 0 16 16"><path d="M3.5 1.5H1.5V14.5H3.5M12.5 1.5H14.5V14.5H12.5" fill="none" stroke="#333" stroke-width="1.2"/><circle cx="6.8" cy="6.8" r="3.6" fill="#e4e4e4" stroke="#444" stroke-width="1.1"/><circle cx="9.2" cy="9.2" r="3.6" fill="#eee" stroke="#444" stroke-width="1.1"/></svg>
 <span class="t" style="left:40px;top:112px;font-size:12px;color:#1a1a1a">Groups</span>
 <svg class="abs" style="left:2px;top:133px" width="10" height="10" viewBox="0 0 10 10"><rect x="0.5" y="0.5" width="9" height="9" fill="#fff" stroke="#999"/><path d="M2.5 5H7.5M5 2.5V7.5" stroke="#333"/></svg>
 <span class="dotH" style="left:12px;top:137px;width:6px"></span>
 <svg class="abs" style="left:18px;top:129px" width="16" height="16" viewBox="0 0 16 16"><ellipse cx="5" cy="8.5" rx="4" ry="2.8" fill="none" stroke="#b89218" stroke-width="2.2"/><ellipse cx="11" cy="8.5" rx="4" ry="2.8" fill="none" stroke="#c9a423" stroke-width="2.2"/><path d="M6 8.5H10" stroke="#6a5010" stroke-width="1"/></svg>
 <span class="t" style="left:40px;top:130px;font-size:12px;color:#1a1a1a">Revit Links</span>
</div>
<div id="split" class="abs"></div>
<div class="abs" style="left:476px;top:569px;width:4px;height:359px;background:linear-gradient(to right,#ececec,#d0d0d0)"></div>
<div id="tabs" class="abs">
 <div class="abs" style="left:0;top:0;width:479px;height:1px;background:#bdbdbd"></div>
 <svg class="abs" style="left:7px;top:5px" width="16" height="15" viewBox="0 0 16 15"><path d="M1.5 1.5H11L14.5 5V13.5H1.5Z" fill="#e6e6e6" stroke="#777" stroke-width="1"/><path d="M11 1.5V5H14.5" fill="none" stroke="#777"/><path d="M4 12V7H8V12M6 9H10V12" fill="none" stroke="#888" stroke-width="0.9"/></svg>
 <span class="t" style="left:30px;top:6px;font-size:11.3px;color:#3a3a3a">DRR-A001-AFRY1-A41570-01 - SF_...</span>
 <div class="abs" style="left:245px;top:2px;width:219px;height:20px;background:#fff"></div>
 <svg class="abs" style="left:249px;top:3px" width="18" height="17" viewBox="0 0 18 17"><path d="M9.5 8.5L16 6.8V13L9.5 15.4Z" fill="#aeb4b0" stroke="#333" stroke-width="1.1" stroke-linejoin="round"/><path d="M6 3.2L12.7 2L16.7 6.7L9.5 8.5Z" fill="#ececec" stroke="#333" stroke-width="1.1" stroke-linejoin="round"/><path d="M2.2 7.6L6 3.2L9.5 8.5V15.4L4 14L3 12.5V8" fill="#fff" stroke="#333" stroke-width="1.1" stroke-linejoin="round"/><rect x="4.6" y="8.8" width="2" height="5.2" fill="#222"/></svg>
 <span class="t" style="left:274px;top:5px;font-size:12.5px;color:#1a1a1a;white-space:pre">{3D - <b style="font-size:12px;letter-spacing:0.1px;color:#222">miguel.gutierrezD74CZ</b>}</span>
 <svg class="abs" style="left:448px;top:8px" width="11" height="11" viewBox="0 0 11 11"><path d="M1 1L10 10M10 1L1 10" stroke="#1a1a1a" stroke-width="1.6"/></svg>
</div>
<div class="abs" style="left:480px;top:130px;width:481px;height:2px;background:#fbfbf6"></div>
<div id="view" class="abs">
 <div class="abs" style="left:0;top:0;width:169px;height:20px;background:#00e6ff"></div>
 <span class="t" style="left:1px;top:1px;font-size:14.8px;line-height:17px;font-weight:bold;color:#0a0a0a">Temporary Hide/Isolate</span>
</div>
<svg class="abs" style="left:0;top:0" width="961" height="928"><polyline points="560,178.5 694.5,178.5 697.0,180.0 699.8,192.0 702.6,204.0 705.2,216.0 707.7,228.0 710.1,240.0 712.5,252.0 714.8,264.0 716.9,276.0 719.1,288.0 721.1,300.0 723.1,312.0 725.0,324.0 726.8,336.0 728.6,348.0 730.3,360.0 732.0,372.0 733.6,384.0 735.1,396.0 736.7,408.0 738.1,420.0 739.5,432.0 740.9,444.0 742.2,456.0 743.5,468.0 744.8,480.0 746.0,492.0 747.2,504.0 748.3,516.0 749.4,528.0 750.5,540.0 751.6,552.0 752.6,564.0 753.5,576.0 754.5,588.0 755.4,600.0 756.3,612.0 757.1,624.0 757.9,636.0 758.7,648.0 759.5,660.0 760.2,672.0 760.9,684.0 761.6,696.0 762.2,708.0 762.8,720.0 763.3,732.0 763.8,744.0 764.3,756.0 764.7,768.0 765.1,780.0 765.5,792.0 765.8,804.0 766.0,816.0 766.2,828.0 766.3,840.0 766.4,852.0 766.5,864.0 766.5,876.0 766.5,888.0 766.5,902.5" fill="none" stroke="#952cb0" stroke-width="1.1"/><path d="M693 179Q694.5 177.5 696.5 178.5Q697.5 180 696.5 181.5Q697 183 697.3 185" fill="none" stroke="#3a1040" stroke-width="1.2"/></svg>
</body></html>
